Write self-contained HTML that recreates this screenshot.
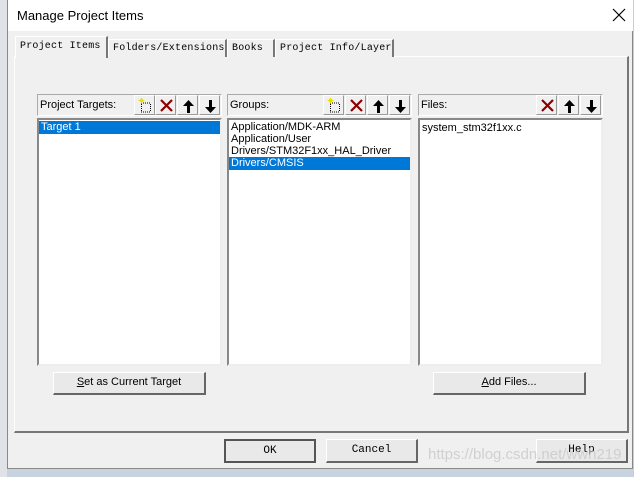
<!DOCTYPE html>
<html><head><meta charset="utf-8"><style>
*{margin:0;padding:0;box-sizing:border-box}
body{width:642px;height:477px;overflow:hidden;background:#c9d3df;position:relative;font-family:"Liberation Sans",sans-serif;font-size:11px;color:#000}
.a{position:absolute}
#dlg{left:7px;top:0;width:626px;height:469px;background:#f0f0f0;border:1px solid #888;border-top:none}
#title{left:0;top:0;width:625px;height:31px;background:#fff}
.mono{font-family:"Liberation Mono",monospace;font-size:10px;white-space:nowrap;letter-spacing:0.2px}
.tab{top:39px;height:18px;background:#f0f0f0;border:1px solid #fff;border-right:2px solid #777;border-bottom:none;padding:3px 0 0 4px;overflow:hidden}
#panel{left:6px;top:56px;width:615px;height:377px;border:1px solid #fff;border-right:2px solid #777;border-bottom:2px solid #777}
.hdr{height:22px;border:1px solid #aaa;border-right-color:#fff;border-bottom-color:#fff;background:#f0f0f0;padding:4px 2px}
.list{background:#fff;border:2px solid #888;border-right-color:#eee;border-bottom-color:#eee}
.btn{background:#e9e9e9;border:1px solid #fff;border-right:2px solid #666;border-bottom:2px solid #666;text-align:center;line-height:19px}
.bm{font-family:"Liberation Mono",monospace;font-size:11px}
.ib{width:21px;height:20px;border:1px solid #fff;border-right:1px solid #999;border-bottom:1px solid #999}
.ib svg{position:absolute;left:2px;top:1px}
.sel{background:#0078d7;color:#fff}
.it{height:12px;line-height:12px;padding-left:2px}
</style></head><body>
<svg width="0" height="0" style="position:absolute">
<defs>
<g id="nw"><path d="M4 6h1M6 6h1M8 6h1M10 6h1M12 6h1M4 15h1M6 15h1M8 15h1M10 15h1M12 15h1" stroke="#000"/><path d="M4 7v1M4 9v1M4 11v1M4 13v1M13 7v1M13 9v1M13 11v1M13 13v1" stroke="#000" transform="translate(0.5 0)"/><path d="M3 2l3 3M6 2L3 5M4.5 1v5M1.5 3.5h6" stroke="#e8e000" stroke-width="1"/></g>
<g id="xx"><path d="M3 3l11 11M14 3L3 14" stroke="#8b0000" stroke-width="2.2"/></g>
<g id="up"><path d="M8.5 3L3 9h4v7h3V9h4z" fill="#000"/></g>
<g id="dn"><path d="M8.5 16L3 10h4V3h3v7h4z" fill="#000"/></g>
</defs></svg>
<div class="a" style="left:0;top:0;width:7px;height:477px;background:#dfe3e8"></div>
<div class="a" style="left:633px;top:0;width:9px;height:477px;background:#fff;border-left:1px solid #ccc"></div>
<div id="dlg" class="a">
 <div id="title" class="a"><span class="a" style="left:9px;top:8px;font-size:13px">Manage Project Items</span>
 <svg class="a" style="left:604px;top:8px" width="14" height="14"><path d="M1 1l12 12M13 1L1 13" stroke="#000" stroke-width="1.2"/></svg></div>
 <div id="panel" class="a"></div>
 <div class="a tab mono" style="left:7px;top:36px;width:93px;height:22px;z-index:2;padding-top:4px">Project Items</div>
 <div class="a tab mono" style="left:100px;width:119px">Folders/Extensions</div>
 <div class="a tab mono" style="left:219px;width:48px">Books</div>
 <div class="a tab mono" style="left:267px;width:119px">Project Info/Layer</div>
</div>
<div class="a hdr" style="left:37px;top:94px;width:185px">Project Targets:</div>
<div class="a ib" style="left:134px;top:95px"><svg width="17" height="17"><use href="#nw"/></svg></div>
<div class="a ib" style="left:155px;top:95px"><svg width="17" height="17"><use href="#xx"/></svg></div>
<div class="a ib" style="left:177px;top:95px"><svg width="17" height="17"><use href="#up"/></svg></div>
<div class="a ib" style="left:199px;top:95px"><svg width="17" height="17"><use href="#dn"/></svg></div>
<div class="a list" style="left:37px;top:118px;width:185px;height:248px">
 <div class="it sel" style="margin-top:1px;height:13px">Target 1</div></div>

<div class="a hdr" style="left:227px;top:94px;width:185px">Groups:</div>
<div class="a ib" style="left:323px;top:95px"><svg width="17" height="17"><use href="#nw"/></svg></div>
<div class="a ib" style="left:345px;top:95px"><svg width="17" height="17"><use href="#xx"/></svg></div>
<div class="a ib" style="left:367px;top:95px"><svg width="17" height="17"><use href="#up"/></svg></div>
<div class="a ib" style="left:389px;top:95px"><svg width="17" height="17"><use href="#dn"/></svg></div>
<div class="a list" style="left:227px;top:118px;width:185px;height:248px">
 <div class="it" style="margin-top:1px">Application/MDK-ARM</div>
 <div class="it">Application/User</div>
 <div class="it">Drivers/STM32F1xx_HAL_Driver</div>
 <div class="it sel" style="height:13px">Drivers/CMSIS</div></div>

<div class="a hdr" style="left:418px;top:94px;width:185px">Files:</div>
<div class="a ib" style="left:536px;top:95px"><svg width="17" height="17"><use href="#xx"/></svg></div>
<div class="a ib" style="left:558px;top:95px"><svg width="17" height="17"><use href="#up"/></svg></div>
<div class="a ib" style="left:580px;top:95px"><svg width="17" height="17"><use href="#dn"/></svg></div>
<div class="a list" style="left:418px;top:118px;width:185px;height:248px">
 <div class="it" style="margin-top:2px">system_stm32f1xx.c</div></div>

<div class="a btn" style="left:53px;top:372px;width:153px;height:23px"><u>S</u>et as Current Target</div>
<div class="a btn" style="left:433px;top:372px;width:153px;height:23px"><u>A</u>dd Files...</div>
<div class="a btn bm" style="left:224px;top:439px;width:92px;height:24px;border:2px solid #555;line-height:20px">OK</div>
<div class="a btn bm" style="left:326px;top:439px;width:92px;height:24px;line-height:21px">Cancel</div>
<div class="a btn bm" style="left:536px;top:439px;width:92px;height:24px;line-height:21px">Help</div>
<div class="a" style="left:428px;top:446px;color:rgba(200,200,200,.8);font-size:15px">https://blog.csdn.net/wwh219</div>
</body></html>
